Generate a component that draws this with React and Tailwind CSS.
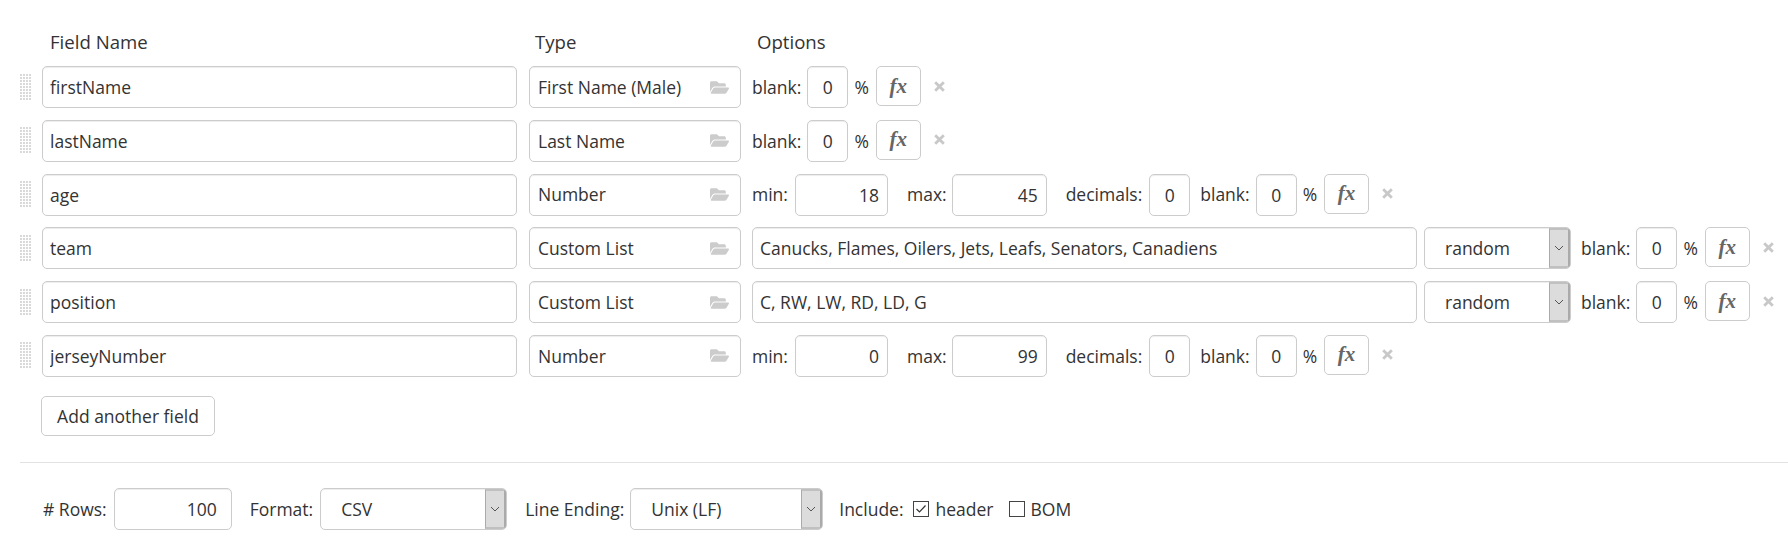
import React from "react";
import { FaFolderOpen } from "react-icons/fa";

const Grip = () => (
  <svg width="11" height="26" viewBox="0 0 11 26" className="block ml-px -mt-px" aria-hidden="true">
    {Array.from({ length: 9 }).flatMap((_, r) =>
      Array.from({ length: 4 }).map((_, c) => (
        <rect key={`${r}-${c}`} x={c * 3} y={r * 3} width="2" height="2" fill="#d9d9d9" />
      ))
    )}
  </svg>
);

const Chevron = () => (
  <svg width="10" height="6" viewBox="0 0 10 6" aria-hidden="true">
    <path d="M1 1 L5 5 L9 1" fill="none" stroke="#555" strokeWidth="1" />
  </svg>
);

const Close = () => (
  <svg width="11" height="11" viewBox="0 0 11 11" aria-hidden="true">
    <path d="M1.2 1.2 L9.8 9.8 M9.8 1.2 L1.2 9.8" fill="none" stroke="#c8c8c8" strokeWidth="2.8" />
  </svg>
);

const box = "h-[42px] rounded-[5px] border border-[#ccc] bg-white shadow-[inset_0_1px_1px_rgba(0,0,0,0.075)] text-[#333] outline-none";

const TextBox = ({ value, className = "" }) => (
  <input readOnly value={value} className={`${box} px-[7px] ${className}`} />
);

const NumBox = ({ value, className = "" }) => (
  <input readOnly value={value} className={`${box} px-2 text-right ${className}`} />
);

const SmallBox = ({ value, className = "" }) => (
  <input readOnly value={value} className={`${box} w-[41px] text-center ${className}`} />
);

const Select = ({ value, className = "" }) => (
  <div className={`${box} flex items-center justify-between overflow-hidden ${className}`}>
    <span className="pl-5">{value}</span>
    <span className="h-full w-[21px] flex items-center justify-center bg-[#dcdcdc] border-l border-[#aaa] border-t-2 border-t-[#c0c0c0] border-r-2 border-r-[#aaa] border-b-2 border-b-[#c0c0c0]">
      <Chevron />
    </span>
  </div>
);

const Blank = () => (
  <>
    <span>blank:</span>
    <SmallBox value="0" className="ml-[6px]" />
    <span className="ml-[6px]">%</span>
    <button className="ml-[7px] w-[45px] h-[40px] -mt-[2px] rounded-[5px] border border-[#ccc] bg-white text-[#666] text-[21px] leading-none font-bold italic [font-family:'Liberation_Serif',serif]">
      fx
    </button>
    <span className="ml-[13px] flex items-center -mt-[2px]"><Close /></span>
  </>
);

const NumberOpts = ({ min, max }) => (
  <>
    <span>min:</span>
    <NumBox value={min} className="ml-[7px] w-[93px]" />
    <span className="ml-[19px]">max:</span>
    <NumBox value={max} className="ml-[5px] w-[95px]" />
    <span className="ml-[19px]">decimals:</span>
    <SmallBox value="0" className="ml-[7px]" />
    <span className="ml-[10px] flex items-center"><Blank /></span>
  </>
);

const ListOpts = ({ value }) => (
  <>
    <TextBox value={value} className="w-[665px]" />
    <Select value="random" className="ml-[7px] w-[147px]" />
    <span className="ml-[10px] flex items-center"><Blank /></span>
  </>
);

const rows = [
  { name: "firstName", type: "First Name (Male)", opts: <Blank /> },
  { name: "lastName", type: "Last Name", opts: <Blank /> },
  { name: "age", type: "Number", opts: <NumberOpts min="18" max="45" /> },
  { name: "team", type: "Custom List", opts: <ListOpts value="Canucks, Flames, Oilers, Jets, Leafs, Senators, Canadiens" /> },
  { name: "position", type: "Custom List", opts: <ListOpts value="C, RW, LW, RD, LD, G" /> },
  { name: "jerseyNumber", type: "Number", opts: <NumberOpts min="0" max="99" /> },
];

const Check = ({ checked }) => (
  <span className="w-[16px] h-[16px] border border-[#444] bg-white flex items-center justify-center">
    {checked && (
      <svg width="12" height="10" viewBox="0 0 12 10" aria-hidden="true">
        <path d="M1.5 5 L4.5 8 L10.5 1.5" fill="none" stroke="#333" strokeWidth="1.2" />
      </svg>
    )}
  </span>
);

export default function App() {
  return (
    <div className="w-[1788px] h-[542px] overflow-hidden bg-white text-[#333] text-[17.5px] [font-family:'Open_Sans',sans-serif] pt-[29px]">
      <div className="flex h-[26px] items-center mb-[11px] text-[18.6px]">
        <span className="ml-[50px] w-[485px]">Field Name</span>
        <span className="w-[222px]">Type</span>
        <span>Options</span>
      </div>
      <div className="flex flex-col gap-[11.8px] pl-[19px]">
        {rows.map((r) => (
          <div key={r.name} className="flex items-center h-[42px]">
            <span className="w-[23px] shrink-0"><Grip /></span>
            <TextBox value={r.name} className="w-[475px] shrink-0" />
            <div className={`${box} ml-[12px] w-[212px] shrink-0 flex items-center justify-between pl-2 pr-[11px]`}>
              <span>{r.type}</span>
              <FaFolderOpen className="text-[#ccc] text-[19px]" />
            </div>
            <div className="ml-[11px] flex items-center whitespace-nowrap">{r.opts}</div>
          </div>
        ))}
      </div>
      <button className="ml-[41px] mt-[19px] h-[40px] w-[174px] rounded-[5px] border border-[#ccc] bg-white text-[#333]">
        Add another field
      </button>
      <div className="ml-[20px] mt-[26px] h-px bg-[#e2e2e2]" />
      <div className="mt-[25px] pl-[43px] flex items-center h-[42px] whitespace-nowrap">
        <span># Rows:</span>
        <NumBox value="100" className="ml-[7px] w-[118px] pr-[14px]" />
        <span className="ml-[18px]">Format:</span>
        <Select value="CSV" className="ml-[7px] w-[187px]" />
        <span className="ml-[18px]">Line Ending:</span>
        <Select value="Unix (LF)" className="ml-[6px] w-[193px]" />
        <span className="ml-[16px]">Include:</span>
        <span className="ml-[9px]"><Check checked /></span>
        <span className="ml-[7px]">header</span>
        <span className="ml-[15px]"><Check /></span>
        <span className="ml-[6px]">BOM</span>
      </div>
    </div>
  );
}
